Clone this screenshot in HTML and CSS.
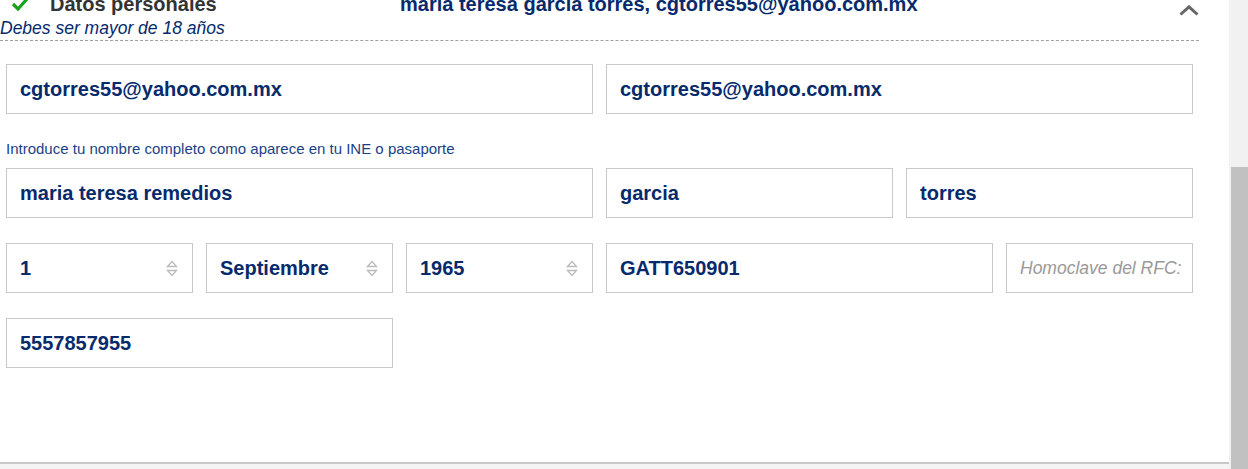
FILE: index.html
```html
<!DOCTYPE html>
<html lang="es">
<head>
<meta charset="utf-8">
<title>Datos personales</title>
<link rel="stylesheet" href="styles.css">
</head>
<body>
<div class="page">
  <main class="main">
    <div class="panel">
      <header class="head">
        <div class="head-title">
          <svg class="check" width="18" height="14" viewBox="0 0 18 14"><path d="M2 7 L7 12 L16 2" fill="none" stroke="#1aa21a" stroke-width="3.2"/></svg>
          <span class="title">Datos personales</span>
        </div>
        <div class="summary">maria teresa garcia torres, cgtorres55@yahoo.com.mx</div>
        <svg class="chev" width="20" height="11" viewBox="0 0 20 11"><path d="M1.5 9.5 L10 1.8 L18.5 9.5" fill="none" stroke="#666" stroke-width="3"/></svg>
      </header>
      <p class="age">Debes ser mayor de 18 años</p>
      <form class="form">
        <div class="grid row1">
          <div class="field s6">cgtorres55@yahoo.com.mx</div>
          <div class="field s6">cgtorres55@yahoo.com.mx</div>
        </div>
        <p class="help">Introduce tu nombre completo como aparece en tu INE o pasaporte</p>
        <div class="grid">
          <div class="field s6">maria teresa remedios</div>
          <div class="field s3">garcia</div>
          <div class="field s3">torres</div>
        </div>
        <div class="grid">
          <div class="field s2 sel">1<svg class="arr" width="12" height="17" viewBox="0 0 12 17"><path d="M1.5 6.5 L6 1.5 L10.5 6.5 Z M1.5 10.5 L6 15.5 L10.5 10.5 Z" fill="none" stroke="#bbb" stroke-width="1.3"/></svg></div>
          <div class="field s2 sel">Septiembre<svg class="arr" width="12" height="17" viewBox="0 0 12 17"><path d="M1.5 6.5 L6 1.5 L10.5 6.5 Z M1.5 10.5 L6 15.5 L10.5 10.5 Z" fill="none" stroke="#bbb" stroke-width="1.3"/></svg></div>
          <div class="field s2 sel">1965<svg class="arr" width="12" height="17" viewBox="0 0 12 17"><path d="M1.5 6.5 L6 1.5 L10.5 6.5 Z M1.5 10.5 L6 15.5 L10.5 10.5 Z" fill="none" stroke="#bbb" stroke-width="1.3"/></svg></div>
          <div class="field s4">GATT650901</div>
          <div class="field s2 ph">Homoclave del RFC:</div>
        </div>
        <div class="grid">
          <div class="field s4">5557857955</div>
        </div>
      </form>
    </div>
    <div class="footer"></div>
  </main>
  <div class="scrollbar"><div class="thumb"></div></div>
</div>
</body>
</html>
```
FILE: styles.css
```css
html, body {
  margin: 0;
  padding: 0;
  height: 469px;
  overflow: hidden;
  background: #fff;
  font-family: "Liberation Sans", Arial, sans-serif;
}
.page {
  display: flex;
  height: 469px;
}
.main {
  width: 1229px;
  display: flex;
  flex-direction: column;
  background: #fff;
}
.panel {
  width: 1199px;
  flex: 1;
}
.head {
  display: flex;
  align-items: flex-start;
  height: 28px;
  margin-top: -10px;
}
.head-title {
  width: 400px;
  display: flex;
  align-items: flex-start;
  margin-top: 3px;
}
.check {
  margin-left: 11px;
  margin-right: 21px;
  margin-top: 4px;
}
.title {
  font-size: 20px;
  line-height: 23px;
  font-weight: bold;
  color: #333;
}
.summary {
  margin-top: 3px;
  font-size: 20px;
  line-height: 23px;
  font-weight: bold;
  color: #062a6b;
  flex: 1;
}
.chev {
  margin-top: 15px;
}
.age {
  margin: 0;
  font-style: italic;
  font-size: 17.5px;
  color: #062a6b;
  line-height: 20px;
  height: 22px;
  border-bottom: 1px dashed #a0a0a0;
}
.form {
  padding: 23px 6px 0 6px;
}
.grid {
  display: grid;
  grid-template-columns: repeat(12, 87px);
  column-gap: 13px;
  margin-bottom: 25px;
}
.grid.row1 {
  margin-bottom: 0;
}
.field {
  height: 48px;
  border: 1px solid #c8c8c8;
  display: flex;
  align-items: center;
  padding: 0 13px;
  font-size: 20px;
  font-weight: bold;
  color: #062a6b;
  white-space: nowrap;
  overflow: hidden;
}
.s2 { grid-column: span 2; }
.s3 { grid-column: span 3; }
.s4 { grid-column: span 4; }
.s6 { grid-column: span 6; }
.sel {
  justify-content: space-between;
  padding-right: 14px;
}
.arr {
  flex: none;
}
.ph {
  font-weight: normal;
  font-style: italic;
  font-size: 17.5px;
  color: #999;
}
.help {
  margin: 0;
  padding: 26px 0 11px;
  font-size: 15px;
  line-height: 17px;
  color: #1b3f87;
}
.footer {
  height: 5px;
  border-top: 2px solid #c8c8c8;
  background: #f4f4f4;
}
.scrollbar {
  width: 19px;
  background: #f1f1f1;
  display: flex;
  flex-direction: column;
  justify-content: flex-end;
}
.thumb {
  height: 302px;
  margin-left: 2px;
  background: #c1c1c1;
}
```
